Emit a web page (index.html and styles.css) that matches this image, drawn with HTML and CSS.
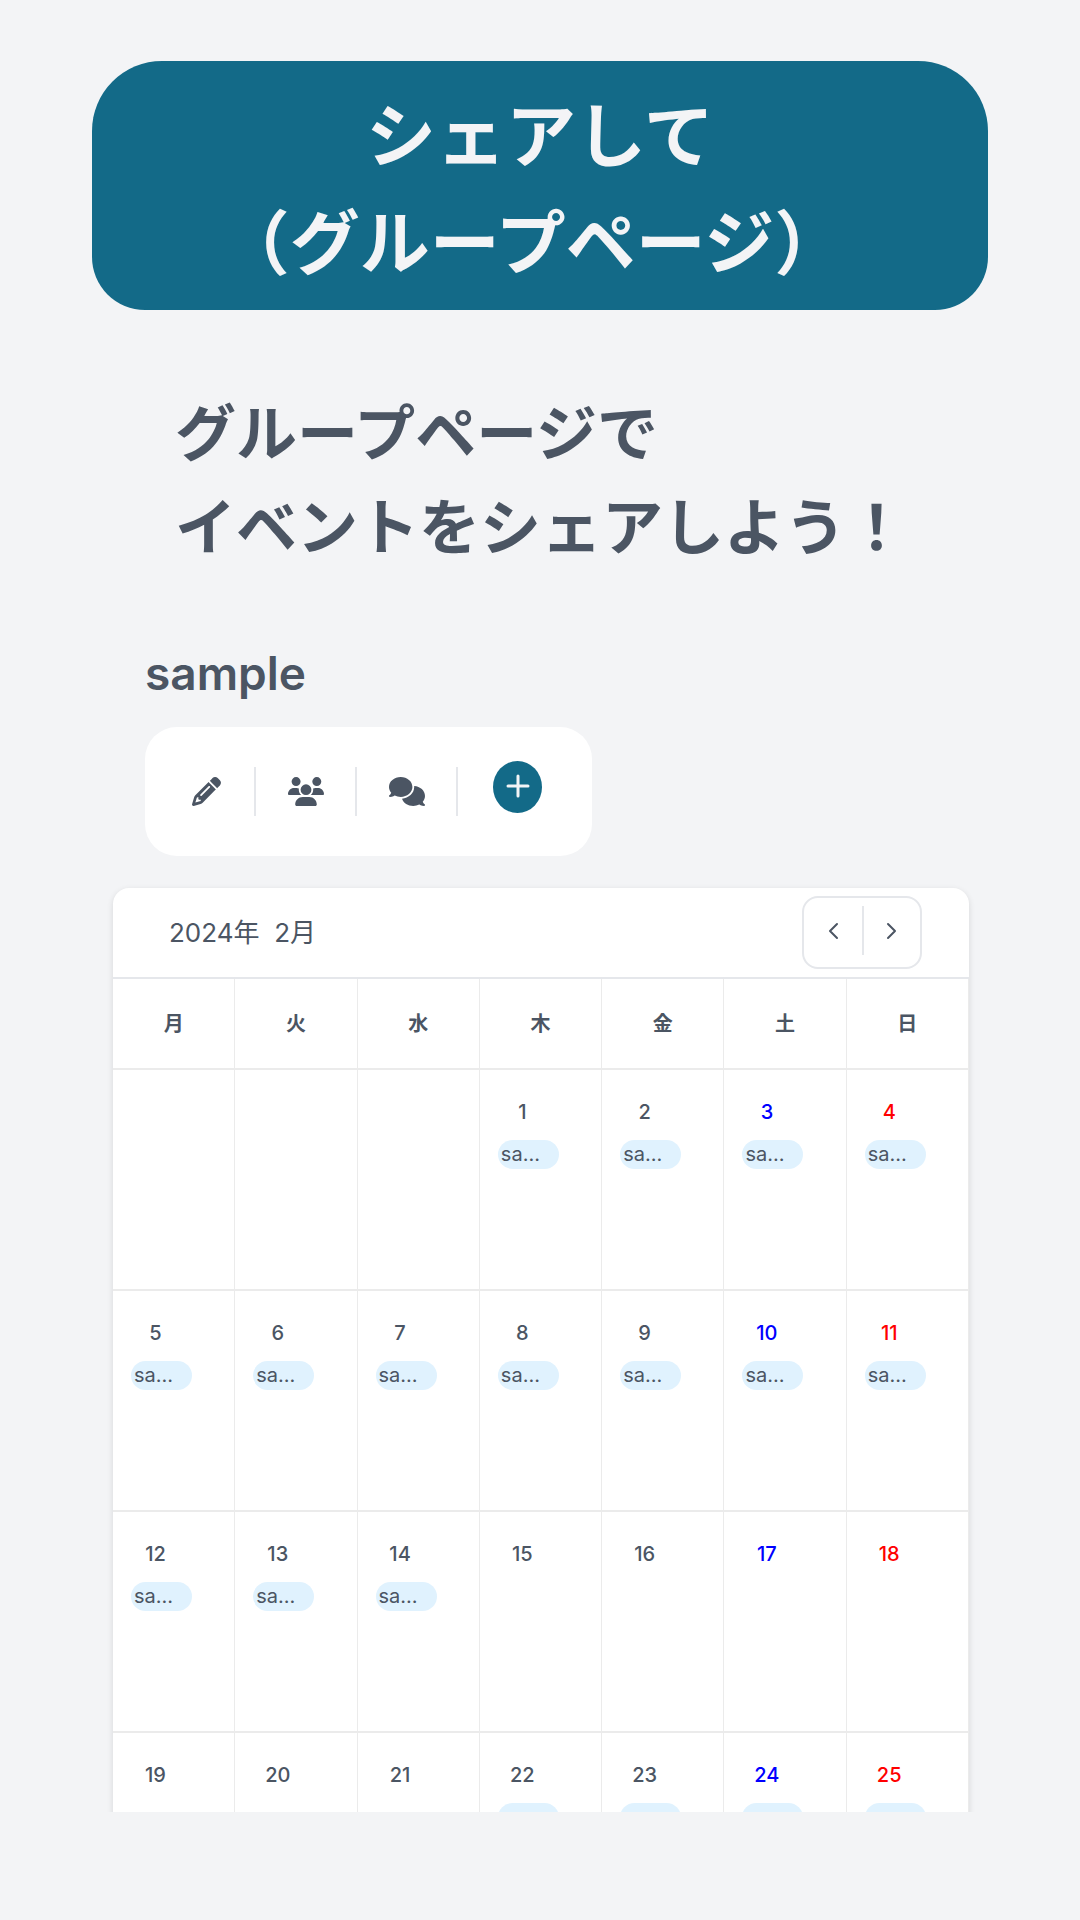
FILE: index.html
```html
<!DOCTYPE html>
<html lang="ja">
<head>
<meta charset="utf-8">
<meta name="viewport" content="width=device-width, initial-scale=1">
<title>グループページ</title>
<link rel="stylesheet" href="styles.css">
</head>
<body>
<main class="page">
  <h1 class="banner">シェアして<br>（グループページ）&nbsp;</h1>
  <p class="lead">グループページで<br>イベントをシェアしよう！</p>

  <section class="group">
    <h2 class="group-name">sample</h2>
    <div class="toolbar">
      <button class="tool" type="button" aria-label="編集">
        <svg class="icon" viewBox="0 0 512 512" aria-hidden="true"><path d="M410.300 231l11.300-11.300-33.900-33.900-62.100-62.100L291.700 89.800l-11.300 11.300-22.600 22.600L58.600 322.900c-10.400 10.400-18 23.300-22.200 37.400L1 480.700c-2.500 8.400-.2 17.500 6.100 23.700s15.300 8.500 23.700 6.100l120.300-35.400c14.100-4.200 27-11.800 37.400-22.200L387.700 253.700 410.300 231zM160 399.400l-9.100 22.700c-4 3.100-8.500 5.400-13.300 6.900L59.400 452l23-78.100c1.400-4.900 3.800-9.400 6.900-13.300l22.700-9.100v32c0 8.800 7.200 16 16 16h32zM362.700 18.700L348.300 33.200 325.700 55.800 314.300 67.100l33.900 33.900 62.100 62.100 33.900 33.900 11.300-11.300 22.600-22.600 14.500-14.500c25-25 25-65.500 0-90.500L453.300 18.700c-25-25-65.500-25-90.500 0zm-47.400 168l-144 144c-6.200 6.200-16.400 6.200-22.600 0s-6.200-16.400 0-22.600l144-144c6.200-6.200 16.400-6.200 22.600 0s6.200 16.400 0 22.600z"/></svg>
      </button>
      <button class="tool" type="button" aria-label="メンバー">
        <svg class="icon icon-wide" viewBox="0 0 640 512" aria-hidden="true"><path d="M144 0a80 80 0 1 1 0 160A80 80 0 1 1 144 0zM512 0a80 80 0 1 1 0 160A80 80 0 1 1 512 0zM0 298.700C0 239.800 47.800 192 106.700 192h42.700c15.900 0 31 3.500 44.600 9.700c-1.300 7.200-1.900 14.700-1.900 22.300c0 38.200 16.800 72.500 43.300 96c-.2 0-.4 0-.7 0H21.300C9.600 320 0 310.400 0 298.700zM405.300 320c-.2 0-.4 0-.7 0c26.600-23.500 43.300-57.800 43.300-96c0-7.600-.7-15-1.900-22.300c13.600-6.300 28.700-9.700 44.600-9.700h42.700C592.200 192 640 239.800 640 298.700c0 11.800-9.600 21.300-21.300 21.300H405.300zM224 224a96 96 0 1 1 192 0 96 96 0 1 1 -192 0zM128 485.300C128 411.700 187.700 352 261.300 352H378.700C452.300 352 512 411.700 512 485.300c0 14.700-11.900 26.700-26.700 26.700H154.700c-14.700 0-26.700-11.900-26.700-26.700z"/></svg>
      </button>
      <button class="tool" type="button" aria-label="チャット">
        <svg class="icon icon-wide" viewBox="0 0 640 512" aria-hidden="true"><path d="M208 352c114.900 0 208-78.800 208-176S322.900 0 208 0S0 78.800 0 176c0 38.600 14.700 74.300 39.600 103.400c-3.500 9.400-8.700 17.700-14.200 24.700c-4.800 6.200-9.700 11-13.300 14.300c-1.800 1.600-3.300 2.900-4.300 3.700c-.5 .4-.9 .7-1.100 .8l-.2 .2C1 327.200-1.400 334.400 .8 340.900S9.100 352 16 352c21.800 0 43.800-5.600 62.100-12.500c9.200-3.500 17.800-7.400 25.200-11.400C134.100 343.300 169.800 352 208 352zM448 176c0 112.300-99.100 196.900-216.500 207C255.800 457.400 336.400 512 432 512c38.200 0 73.900-8.700 104.700-23.900c7.500 4 16 7.900 25.200 11.400c18.300 6.900 40.300 12.500 62.100 12.500c6.900 0 13.100-4.500 15.200-11.100c2.100-6.600-.2-13.800-5.800-17.900l-.2-.2c-.2-.2-.6-.4-1.100-.8c-1-.8-2.500-2-4.300-3.700c-3.600-3.300-8.500-8.100-13.300-14.300c-5.500-7-10.700-15.400-14.200-24.700c24.900-29 39.600-64.700 39.600-103.400c0-92.800-84.900-168.900-192.600-175.500c.4 5.100 .6 10.300 .6 15.500z"/></svg>
      </button>
      <button class="add" type="button" aria-label="追加">
        <svg class="plus" viewBox="0 0 24 24" aria-hidden="true"><path d="M12 2v20M2 12h20"/></svg>
      </button>
    </div>
  </section>

  <section class="viewport">
    <div class="calendar">
      <header class="calendar-head">
        <h3 class="month">2024年&nbsp; 2月</h3>
        <div class="nav">
          <button class="nav-btn" type="button" aria-label="前の月"><svg class="chevron" viewBox="0 0 12 18" aria-hidden="true"><path d="M10 2L3 9l7 7"/></svg></button>
          <button class="nav-btn" type="button" aria-label="次の月"><svg class="chevron" viewBox="0 0 12 18" aria-hidden="true"><path d="M2 2l7 7-7 7"/></svg></button>
        </div>
      </header>
      <table class="days">
        <thead>
          <tr><th scope="col">月</th><th scope="col">火</th><th scope="col">水</th><th scope="col">木</th><th scope="col">金</th><th scope="col">土</th><th scope="col">日</th></tr>
        </thead>
        <tbody>
          <tr>
            <td></td><td></td><td></td>
            <td><span class="date">1</span><a class="event" href="#">sa…</a></td>
            <td><span class="date">2</span><a class="event" href="#">sa…</a></td>
            <td><span class="date sat">3</span><a class="event" href="#">sa…</a></td>
            <td><span class="date sun">4</span><a class="event" href="#">sa…</a></td>
          </tr>
          <tr>
            <td><span class="date">5</span><a class="event" href="#">sa…</a></td>
            <td><span class="date">6</span><a class="event" href="#">sa…</a></td>
            <td><span class="date">7</span><a class="event" href="#">sa…</a></td>
            <td><span class="date">8</span><a class="event" href="#">sa…</a></td>
            <td><span class="date">9</span><a class="event" href="#">sa…</a></td>
            <td><span class="date sat">10</span><a class="event" href="#">sa…</a></td>
            <td><span class="date sun">11</span><a class="event" href="#">sa…</a></td>
          </tr>
          <tr>
            <td><span class="date">12</span><a class="event" href="#">sa…</a></td>
            <td><span class="date">13</span><a class="event" href="#">sa…</a></td>
            <td><span class="date">14</span><a class="event" href="#">sa…</a></td>
            <td><span class="date">15</span></td>
            <td><span class="date">16</span></td>
            <td><span class="date sat">17</span></td>
            <td><span class="date sun">18</span></td>
          </tr>
          <tr>
            <td><span class="date">19</span></td>
            <td><span class="date">20</span></td>
            <td><span class="date">21</span></td>
            <td><span class="date">22</span><a class="event" href="#" aria-label="イベント"></a></td>
            <td><span class="date">23</span><a class="event" href="#" aria-label="イベント"></a></td>
            <td><span class="date sat">24</span><a class="event" href="#" aria-label="イベント"></a></td>
            <td><span class="date sun">25</span><a class="event" href="#" aria-label="イベント"></a></td>
          </tr>
        </tbody>
      </table>
    </div>
  </section>
</main>
</body>
</html>
```
FILE: styles.css
```css
* {
  box-sizing: border-box;
}

body {
  margin: 0;
  background: #f3f4f6;
  color: #4b5563;
  font-family: Inter, "Noto Sans CJK JP", sans-serif;
}

h1, h2, h3, p {
  margin: 0;
}

button {
  padding: 0;
  border: 0;
  background: none;
  color: inherit;
}

.page {
  display: flex;
  flex-direction: column;
  height: 100vh;
  padding: 61px 92px 108px;
}

.banner {
  padding: 17px 0 18px;
  border-radius: 70px 70px 53px 53px;
  background: #136a88;
  color: #f3f4f6;
  font: 700 70px/107px "Noto Sans CJK JP", sans-serif;
  text-align: center;
}

.lead {
  padding: 73px 0 0 83px;
  font: 700 61px/94px "Noto Sans CJK JP", sans-serif;
}

.group {
  padding: 70px 53px 0;
}

.group-name {
  font-size: 46px;
  font-weight: 600;
  line-height: 64px;
}

.toolbar {
  display: flex;
  align-items: center;
  width: fit-content;
  height: 129px;
  margin-top: 22px;
  padding: 0 50px 0 10px;
  border-radius: 32px;
  background: #fff;
}

.tool {
  display: grid;
  place-items: center;
  width: 101px;
  height: 49px;
  border-right: 2px solid #e5e7eb;
}

.tool:first-child {
  padding-left: 4px;
}

.icon {
  width: 29px;
  height: 29px;
  fill: currentColor;
}

.icon-wide {
  width: 36px;
}

.add {
  display: grid;
  place-items: center;
  width: 49px;
  height: 52px;
  margin: 0 0 9px 35px;
  padding-bottom: 2px;
  border-radius: 50%;
  background: #136a88;
}

.plus {
  width: 24px;
  height: 24px;
  fill: none;
  stroke: #f3f4f6;
  stroke-width: 3;
  stroke-linecap: round;
}

.viewport {
  flex: 1;
  min-height: 0;
  margin-top: 16px;
  padding: 16px 19px 0 21px;
  overflow: hidden;
}

.calendar {
  border-radius: 16px 16px 0 0;
  background: #fff;
  box-shadow: 0 2px 6px rgba(0, 0, 0, 0.12);
}

.calendar-head {
  display: flex;
  align-items: center;
  justify-content: space-between;
  height: 91px;
  padding: 0 47px 0 56px;
  border-bottom: 2px solid #e5e7eb;
}

.month {
  font-size: 26px;
  font-weight: 400;
  line-height: 32px;
}

.nav {
  display: flex;
  align-items: center;
  height: 73px;
  padding-bottom: 4px;
  border: 2px solid #e5e7eb;
  border-radius: 16px;
}

.nav-btn {
  display: grid;
  place-items: center;
  width: 58px;
  height: 49px;
}

.nav-btn + .nav-btn {
  border-left: 2px solid #e5e7eb;
}

.chevron {
  width: 12px;
  height: 18px;
  fill: none;
  stroke: currentColor;
  stroke-width: 2;
  stroke-linecap: round;
  stroke-linejoin: round;
}

.days {
  width: 100%;
  border-spacing: 0;
  table-layout: fixed;
}

.days th,
.days td {
  border-right: 1px solid #ebebeb;
  border-bottom: 2px solid #ebebeb;
}

.days th {
  height: 91px;
  padding: 0 0 2px;
  font-size: 20px;
  font-weight: 700;
}

.days td {
  height: 221px;
  padding: 28px 18px 0;
  vertical-align: top;
}

.date {
  display: block;
  width: 49px;
  font-size: 20px;
  font-weight: 500;
  line-height: 28px;
  text-align: center;
}

.sat {
  color: #00f;
}

.sun {
  color: #f00;
}

.event {
  display: block;
  width: 61px;
  height: 29px;
  margin-top: 14px;
  padding: 0 3px;
  border-radius: 15px;
  background: #e0f2fe;
  color: inherit;
  font-size: 20px;
  line-height: 29px;
  text-decoration: none;
  white-space: nowrap;
}
```
